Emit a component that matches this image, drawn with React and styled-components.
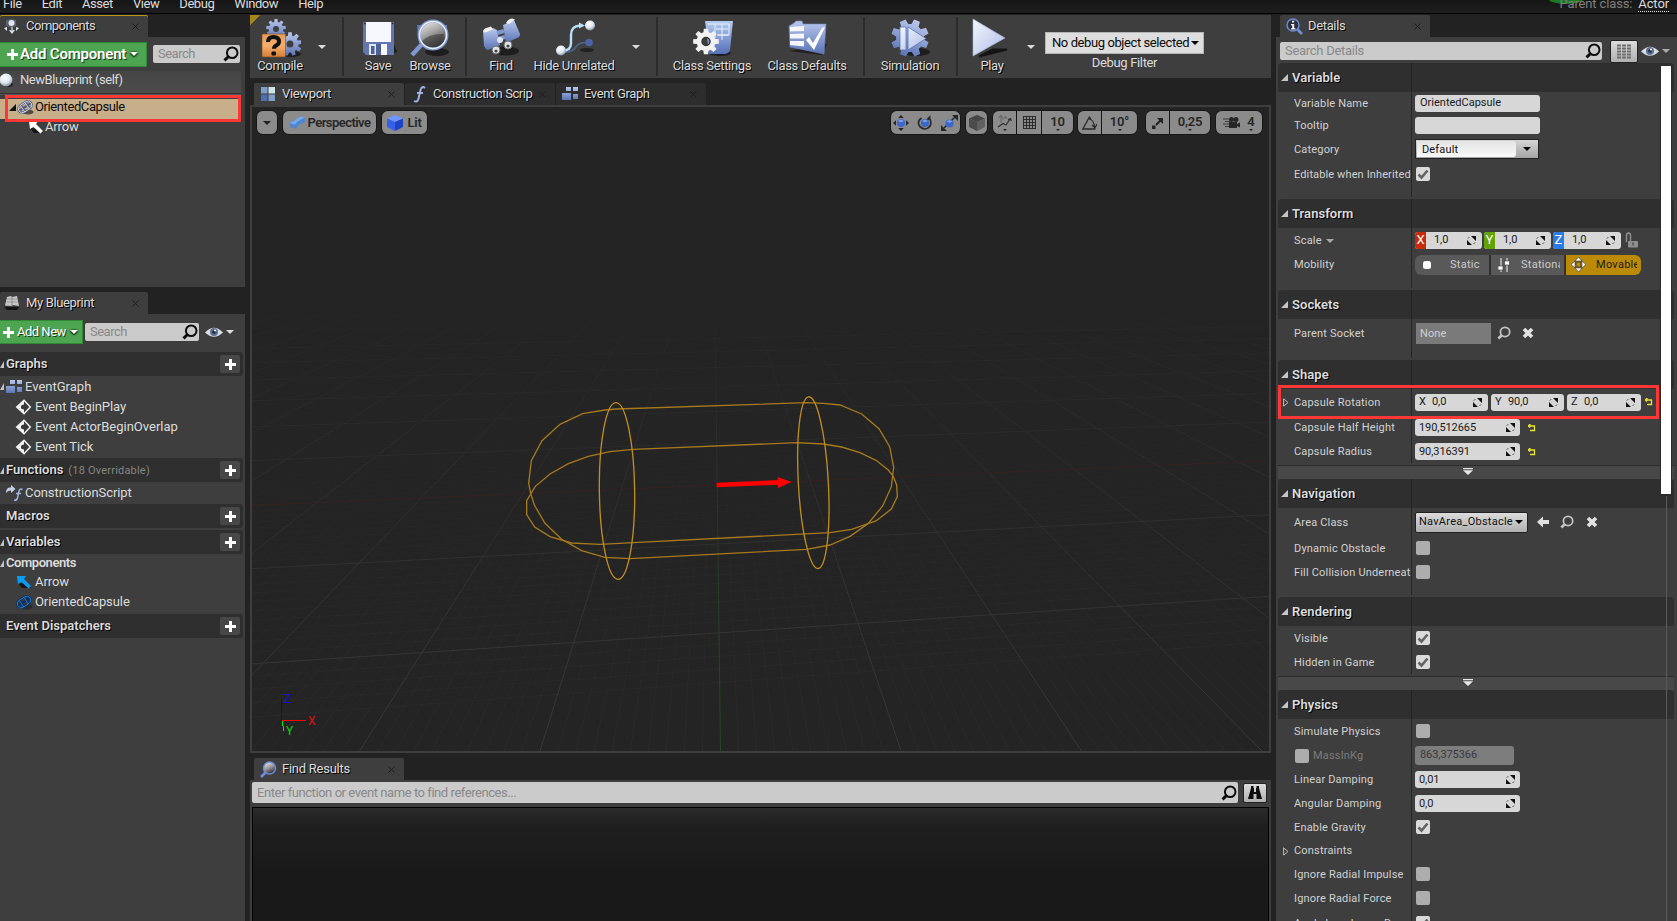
import React from "react";
import styled, { createGlobalStyle, css } from "styled-components";

const GlobalStyle = createGlobalStyle`
  * { box-sizing: border-box; }
  body { margin: 0; background: #222; overflow: hidden; }
  svg { display: block; flex: none; }
`;

/* ---------- shell ---------- */

const Editor = styled.div`
  width: 1677px;
  height: 921px;
  overflow: hidden;
  display: flex;
  flex-direction: column;
  background: #222222;
  color: #dcdcdc;
  font-family: Roboto, "Liberation Sans", sans-serif;
  font-size: 13px;
  line-height: 16px;
  white-space: nowrap;
`;

const MenuBar = styled.div`
  flex: none;
  height: 14px;
  display: flex;
  justify-content: space-between;
  padding: 0 8px 0 3px;
  background: linear-gradient(#161616, #1e1e1e);
  border-bottom: 1px solid #000;
  overflow: hidden;
`;

const MenuGroup = styled.div`
  display: flex;
  gap: ${(p) => p.$gap}px;
  margin-top: -4px;
  letter-spacing: ${(p) => p.$ls || 0}px;
`;

const ParentLabel = styled.span`
  color: #808080;
  letter-spacing: -0.15px;
`;

const ParentLink = styled.span`
  height: 16px;
  letter-spacing: -0.1px;
  border-bottom: 1px dotted #ddd;
`;

const GreenMark = styled.div`
  width: 36px;
  height: 12px;
  margin: -4px -30px 0 0;
  border-radius: 50%;
  background: #1e7a1e;
`;

const Body = styled.div`
  flex: 1;
  min-height: 0;
  display: grid;
  grid-template-columns: 245px 1021px 401px;
  column-gap: 5px;
  padding-top: 1px;
`;

const Column = styled.div`
  display: flex;
  flex-direction: column;
  min-width: 0;
  min-height: 0;
`;

const TabStrip = styled.div`
  flex: none;
  display: flex;
  gap: 1px;
  height: 22px;
  margin-top: ${(p) => p.$mt || 0}px;
  padding-left: ${(p) => p.$pl || 0}px;
`;

const TabBox = styled.div`
  display: flex;
  align-items: center;
  width: ${(p) => p.$w || 150}px;
  height: 22px;
  padding: 0 9px 0 ${(p) => p.$pl ?? 6}px;
  border-radius: 2px 2px 0 0;
  background: ${(p) => (p.$dim ? "#2d2d2d" : "#3e3e3e")};
  text-shadow: 1px 1px 0 #000;
  letter-spacing: ${(p) => p.$ls ?? -0.35}px;
  ${(p) => p.$accent && css`box-shadow: inset 0 1px 0 #b8960f;`}
`;

const TabText = styled.span`
  flex: 1;
  margin-left: ${(p) => p.$ml ?? 6}px;
`;

const Panel = styled.div`
  display: flex;
  flex-direction: column;
  background: #3e3e3e;
  ${(p) => (p.$h ? css`height: ${p.$h}px; flex: none;` : css`flex: 1; min-height: 0;`)}
`;

/* ---------- shared controls ---------- */

const GreenButton = styled.div`
  display: flex;
  align-items: center;
  width: ${(p) => p.$w}px;
  height: ${(p) => p.$h}px;
  padding-left: ${(p) => p.$pl}px;
  gap: ${(p) => p.$gap}px;
  color: #fff;
  background: #4ea551;
  border: 1px solid #2f8a35;
  border-left: 0;
  text-shadow: 1px 1px 0 #1c3c1d;
  font-size: ${(p) => p.$size}px;
  font-weight: ${(p) => p.$weight};
  letter-spacing: ${(p) => p.$ls}px;
`;

const SearchField = styled.div`
  display: flex;
  align-items: center;
  justify-content: space-between;
  width: ${(p) => p.$w}px;
  height: ${(p) => p.$h || 18}px;
  margin-left: ${(p) => p.$ml || 0}px;
  padding: 0 1px 0 5px;
  border-radius: 2px;
  background: #cbcbcb;
  color: #898989;
  letter-spacing: ${(p) => p.$ls ?? -0.5}px;
`;

const Caret = styled.i`
  display: block;
  flex: none;
  width: 0;
  height: 0;
  margin-left: ${(p) => p.$ml || 0}px;
  border-style: solid;
  border-color: ${(p) => p.$c || "#dcdcdc"} transparent transparent;
  border-width: ${(p) => p.$s || 4}px ${(p) => p.$s || 4}px 0;
`;

const BoldCaret = styled(Caret)`
  filter: drop-shadow(0 0 1px #12300f) drop-shadow(0 1px 0 #12300f);
`;

const Corner = styled.i`
  display: block;
  flex: none;
  width: 0;
  height: 0;
  border-style: solid;
  border-color: transparent transparent ${(p) => p.$c || "#c4c4c4"} transparent;
  border-width: 0 0 7px ${(p) => p.$s || 7}px;
`;

/* ---------- left column ---------- */

const ToolRow = styled.div`
  flex: none;
  display: flex;
  align-items: center;
  height: ${(p) => p.$h}px;
  padding-bottom: ${(p) => p.$pb || 0}px;
`;

const SelfRow = styled.div`
  flex: none;
  display: flex;
  align-items: center;
  gap: 7px;
  height: 22px;
  width: 241px;
  padding-bottom: 4px;
  letter-spacing: -0.45px;
  background: linear-gradient(#454545, #4c4c4c);
  box-shadow: 0 1px 0 #333, 0 2px 0 #555;
`;

const TreeRow = styled.div`
  position: relative;
  flex: none;
  display: flex;
  align-items: center;
  height: ${(p) => p.$h || 20}px;
  padding-left: ${(p) => p.$pl || 0}px;
  gap: ${(p) => p.$gap ?? 3}px;
  letter-spacing: ${(p) => p.$ls ?? -0.07}px;
  font-weight: ${(p) => (p.$bold ? 600 : 400)};
  ${(p) => p.$selected && css`
    width: 239px;
    margin-top: 6px;
    padding-bottom: 4px;
    color: #0d0d0d;
    background: #c9ae8a;
  `}
`;

const RedFrame = styled.div`
  position: absolute;
  left: ${(p) => p.$x}px;
  top: ${(p) => p.$y}px;
  width: ${(p) => p.$w}px;
  height: ${(p) => p.$h}px;
  border: 3px solid #fb3836;
  z-index: 2;
`;

const SectionBar = styled.div`
  flex: none;
  display: flex;
  align-items: center;
  width: 243px;
  height: 24px;
  margin-top: ${(p) => p.$mt || 0}px;
  padding: 0 3px 0 ${(p) => (p.$closed ? 6 : 0)}px;
  background: #2f2f2f;
  border-radius: 0 3px 3px 0;
  font-weight: 600;
  text-shadow: 1px 1px 0 #000;
`;

const SectionTitle = styled.span`
  margin-left: ${(p) => p.$ml || 0}px;
  letter-spacing: 0px;
`;

const SectionNote = styled.span`
  margin: 2px 0 0 5px;
  color: #858585;
  font-size: 11px;
  font-weight: 400;
  text-shadow: none;
  letter-spacing: 0.2px;
`;

const PlusButton = styled.div`
  width: 20px;
  height: 18px;
  margin-left: auto;
  display: grid;
  place-items: center;
  border-radius: 2px;
  background: #474747;
`;

/* ---------- toolbar ---------- */

const Toolbar = styled.div`
  flex: none;
  display: flex;
  height: 63px;
  background: linear-gradient(135deg, #a5841c 0 7px, transparent 7.5px), #3e3e3e;
`;

const ToolItem = styled.div`
  flex: none;
  display: flex;
  flex-direction: column;
  align-items: center;
  width: ${(p) => p.$w}px;
  padding-top: 3px;
  text-shadow: 1px 1px 0 #000;
  letter-spacing: -0.32px;
`;

const ToolDrop = styled.div`
  flex: none;
  display: grid;
  place-items: center;
  width: ${(p) => p.$w || 24}px;
  height: 63px;
  margin-left: ${(p) => p.$ml || 0}px;
`;

const ToolSep = styled.div`
  flex: none;
  width: 2px;
  height: 59px;
  margin: 2px 0 0 ${(p) => p.$ml}px;
  background: #2b2b2b;
`;

const DebugBox = styled.div`
  display: flex;
  flex-direction: column;
  align-items: center;
  gap: 1px;
  width: 159px;
  margin: 17px 0 0 9px;
  letter-spacing: -0.35px;
`;

const DebugSelect = styled.div`
  display: flex;
  align-items: center;
  width: 159px;
  height: 22px;
  padding-left: 6px;
  background: #dedede;
  border: 1px solid #b5b5b5;
  color: #0a0a0a;
  letter-spacing: -0.41px;
`;

/* ---------- viewport ---------- */

const ViewFrame = styled.div`
  position: relative;
  flex: none;
  width: 1021px;
  height: 648px;
  border: 2px solid #3e3e3e;
  background: #242424;
`;

const Scene = styled.svg`
  position: absolute;
  left: 0;
  top: 0;
`;

const ViewTools = styled.div`
  position: relative;
  display: flex;
  padding: 3px 4px 0 4px;
`;

const Pill = styled.div`
  display: flex;
  width: ${(p) => p.$w}px;
  height: 25px;
  margin-left: ${(p) => p.$ml || 0}px;
  border: 1px solid #151515;
  border-radius: 7px;
  background: #8b8b8b;
  color: #262626;
  font-weight: 600;
  letter-spacing: ${(p) => p.$ls ?? -0.15}px;
  overflow: hidden;
`;

const PillPart = styled.div`
  flex: ${(p) => (p.$w ? "none" : 1)};
  width: ${(p) => (p.$w ? p.$w + "px" : "auto")};
  display: flex;
  flex-direction: ${(p) => (p.$col ? "column" : "row")};
  align-items: center;
  justify-content: center;
  gap: ${(p) => p.$gap || 0}px;
  border-left: ${(p) => (p.$line ? "1px solid #151515" : "0")};
  line-height: 15px;
`;

/* ---------- find results ---------- */

const FindBar = styled.div`
  display: flex;
  align-items: center;
  gap: 5px;
  padding: 2px 0 0 2px;
`;

const SilverButton = styled.div`
  display: grid;
  place-items: center;
  width: ${(p) => p.$w}px;
  height: ${(p) => p.$h}px;
  border-radius: 2px;
  border: 1px solid #222;
  background: linear-gradient(#dcdcdc, #b0b0b0);
`;

const ResultList = styled.div`
  flex: 1;
  margin: 4px 2px 0 2px;
  border: 1px solid #000;
  border-bottom: 0;
  background: linear-gradient(#2a2a2a, #1f1f1f 18px, #181818 70px, #191919);
`;

/* ---------- details ---------- */

const DetailsBody = styled(Panel)`
  position: relative;
  padding: 5px 3px 0 2px;
`;

const DetailTools = styled.div`
  flex: none;
  display: flex;
  align-items: center;
  height: 18px;
  margin-bottom: 3px;
  padding-left: 2px;
`;

const CategoryHead = styled.div`
  flex: none;
  display: flex;
  height: 29px;
  margin-top: ${(p) => p.$mt ?? 0}px;
  background: #2f2f2f;
  border-radius: 4px 4px 0 0;
`;

const HeadCell = styled.div`
  display: flex;
  align-items: center;
  width: 134px;
  gap: 4px;
  padding-left: 3px;
  border-right: 1px solid #222;
  font-weight: 600;
  font-size: 13px;
  letter-spacing: 0.05px;
  text-shadow: 1px 1px 0 #000;
`;

const PropRow = styled.div`
  position: relative;
  flex: none;
  display: flex;
  height: ${(p) => p.$h}px;
`;

const PropLabel = styled.div`
  flex: none;
  display: flex;
  align-items: center;
  width: 134px;
  padding-top: 1px;
  padding-left: ${(p) => p.$pl ?? 16}px;
  gap: ${(p) => p.$gap ?? 4}px;
  border-right: 1px solid #262626;
  color: ${(p) => (p.$dim ? "#7c7c7c" : "#d2d2d2")};
  font-size: 11px;
  letter-spacing: ${(p) => p.$ls ?? 0.18}px;
  overflow: hidden;
`;

const PropValue = styled.div`
  display: flex;
  align-items: center;
  padding-left: ${(p) => p.$pl ?? 3}px;
  font-size: 11px;
  letter-spacing: 0.1px;
`;

const Field = styled.div`
  display: flex;
  align-items: center;
  justify-content: space-between;
  width: ${(p) => p.$w}px;
  height: ${(p) => p.$h || 17}px;
  margin-right: ${(p) => p.$mr || 0}px;
  padding: 0 5px 0 ${(p) => p.$pl ?? 4}px;
  border-radius: 3px;
  background: ${(p) => (p.$dim ? "#7d7d7d" : "#d7d7d7")};
  color: ${(p) => (p.$dim ? "#3a3a3a" : "#1a1a1a")};
  letter-spacing: ${(p) => p.$ls ?? -0.08}px;
`;

const AxisField = styled(Field)`
  padding-left: 0;
  padding-right: 6px;
  justify-content: flex-start;
  overflow: hidden;
  & > svg { margin-left: auto; }
`;

const AxisTag = styled.span`
  display: grid;
  place-items: center;
  align-self: stretch;
  width: 11px;
  margin-right: 8px;
  color: #fff;
  font-size: 13px;
  letter-spacing: 0;
  background: ${(p) => p.$c};
`;

const AxisName = styled.span`
  width: 17px;
  padding-left: 4px;
`;

const CategoryCombo = styled.div`
  display: flex;
  width: 124px;
  height: 20px;
  padding: 1px;
  border: 1px solid #222;
  background: linear-gradient(#d5d5d5, #a5a5a5);
  color: #111;
  align-items: center;
`;

const ComboText = styled.div`
  width: 99px;
  height: 16px;
  padding-left: 5px;
  border-radius: 0 3px 3px 0;
  background: linear-gradient(#e4e4e4, #fafafa);
  letter-spacing: 0.15px;
  line-height: 17px;
`;

const ClassCombo = styled(SilverButton)`
  display: flex;
  align-items: center;
  justify-content: space-between;
  padding: 0 4px 0 3px;
  color: #111;
  letter-spacing: 0.25px;
`;

const SocketBox = styled.div`
  width: 75px;
  height: 21px;
  padding: 3px 4px;
  line-height: 15px;
  background: #7a7a7a;
  color: #cfcfcf;
`;

const CheckBox = styled.div`
  flex: none;
  display: grid;
  place-items: center;
  width: 14px;
  height: 14px;
  border-radius: 2px;
  background: ${(p) => (p.$on ? "#dadada" : "#adadad")};
`;

const Segments = styled.div`
  display: flex;
  gap: 2px;
  width: 226px;
  height: 20px;
  border-radius: 6px;
  overflow: hidden;
  background: #303030;
`;

const Segment = styled.div`
  display: flex;
  align-items: center;
  width: ${(p) => p.$w}px;
  padding-left: ${(p) => p.$pl}px;
  gap: ${(p) => p.$gap}px;
  padding-right: 4px;
  background: ${(p) => (p.$on ? "#bb8a09" : "#595959")};
  color: ${(p) => (p.$on ? "#1d1d1d" : "#cccccc")};
  letter-spacing: 0.28px;
`;

const Clip = styled.span`
  overflow: hidden;
`;

const IconGap = styled.span`
  display: block;
  margin-left: ${(p) => p.$ml}px;
`;

const Filler = styled.div`
  flex: none;
  width: 134px;
  height: ${(p) => p.$h}px;
  border-right: 1px solid #262626;
`;

const Expander = styled.div`
  flex: none;
  display: flex;
  justify-content: center;
  height: 14px;
  margin-top: 2px;
  padding: 2px 16px 0 0;
  border-top: 1px solid #2c2c2c;
  background: #484848;
`;

const ScrollThumb = styled.div`
  position: absolute;
  left: 385px;
  top: 29px;
  width: 10px;
  height: 428px;
  background: #fff;
  box-shadow: 0 1px 0 1px #2a2a2a;
  z-index: 3;
`;

const ScrollTrack = styled.div`
  position: absolute;
  left: 390px;
  top: 457px;
  width: 1px;
  height: 430px;
  background: #595959;
`;

/* ---------- icons ---------- */

const HiddenDefs = styled.svg`
  position: absolute;
`;

const SharedGradients = () => (
  <HiddenDefs width="0" height="0">
    <defs>
      <linearGradient id="steel" x1="0" y1="0" x2="0" y2="1"><stop offset="0" stopColor="#b9c8ee" /><stop offset="1" stopColor="#5a74b4" /></linearGradient>
      <linearGradient id="pale" x1="0" y1="0" x2="1" y2="1"><stop offset="0" stopColor="#f4f8fd" /><stop offset="1" stopColor="#aebbe6" /></linearGradient>
      <linearGradient id="sheet" x1="0" y1="0" x2="0" y2="1"><stop offset="0" stopColor="#b4cdee" /><stop offset="1" stopColor="#5570b8" /></linearGradient>
      <linearGradient id="orange" x1="0" y1="0" x2="0" y2="1"><stop offset="0" stopColor="#eb9a56" /><stop offset=".5" stopColor="#f7ad6b" /><stop offset="1" stopColor="#d57f38" /></linearGradient>
      <linearGradient id="glass" x1="0" y1="0" x2=".5" y2="1"><stop offset="0" stopColor="#fafafa" /><stop offset=".55" stopColor="#9b9b9b" /><stop offset="1" stopColor="#333" /></linearGradient>
      <radialGradient id="ball" cx=".4" cy=".3" r=".7"><stop offset="0" stopColor="#fff" /><stop offset=".6" stopColor="#dfe8f0" /><stop offset="1" stopColor="#8a95a0" /></radialGradient>
    </defs>
  </HiddenDefs>
);

const gearPath = (cx, cy, outer, inner, teeth = 8) => {
  const pts = [];
  for (let i = 0; i < teeth; i++) {
    const a = (i * 2 * Math.PI) / teeth;
    const s = Math.PI / teeth;
    [[a - s * 0.7, inner], [a - s * 0.42, outer], [a + s * 0.42, outer], [a + s * 0.7, inner]].forEach(([t, r]) =>
      pts.push(`${(cx + r * Math.sin(t)).toFixed(2)},${(cy - r * Math.cos(t)).toFixed(2)}`)
    );
  }
  return `M${pts.join("L")}Z`;
};

const holed = (cx, cy, r) => `M${cx - r},${cy}a${r},${r} 0 1 0 ${2 * r},0a${r},${r} 0 1 0 ${-2 * r},0Z`;

const CompileIcon = () => (
  <svg width="42" height="40" viewBox="0 0 42 40">
    <ellipse cx="32" cy="36" rx="10" ry="3" fill="#1d1d1d" />
    <path fillRule="evenodd" fill="url(#steel)" d={gearPath(17, 11, 10, 7.2, 9) + holed(17, 11, 3)} />
    <path fillRule="evenodd" fill="url(#steel)" d={gearPath(31, 26, 12, 8.5, 9) + holed(31, 26, 3.5)} />
    <rect x="3" y="16" width="23.500" height="23" rx="1" fill="url(#orange)" stroke="#7a4a1e" strokeWidth=".6" />
    <path d="M9 24q0-5 5.500-5t5.500 4.500q0 2.500-2.500 3.800t-2.500 3.400" fill="none" stroke="#111" strokeWidth="4" />
    <rect x="12.500" y="33.500" width="4.500" height="4" rx="1" fill="#111" />
  </svg>
);

const SaveIcon = () => (
  <svg width="42" height="40" viewBox="0 0 42 40">
    <path d="M30 38l10-4-4-10z" fill="#1d1d1d" />
    <path d="M6 4h31v33H9l-3-3z" fill="#6377ae" />
    <rect x="9" y="4" width="25" height="20" fill="#f6f8fd" />
    <rect x="12" y="26" width="18" height="11" fill="#dfe5f5" />
    <rect x="19" y="26" width="5" height="11" fill="#4d6097" /><rect x="14" y="28" width="3.500" height="8" fill="#4d6097" />
    <path d="M24 26h6v11h-6z" fill="#f6f8fd" />
    <path d="M7 5.500h1.500M35 5.500h1.500" stroke="#20284a" strokeWidth="1.500" />
  </svg>
);

const BrowseIcon = () => (
  <svg width="42" height="40" viewBox="0 0 42 40">
    <ellipse cx="28" cy="34" rx="12" ry="4" fill="#1d1d1d" />
    <path d="M8 7h30v18H10z" fill="#5f78b5" />
    <path d="M3 37L14 25" stroke="#7f98d0" strokeWidth="4.500" />
    <circle cx="24" cy="17" r="14" fill="url(#glass)" stroke="#7f9ad2" strokeWidth="3" />
    <circle cx="24" cy="17" r="13.500" fill="none" stroke="#e8effb" strokeWidth="1.400" />
    <path d="M13 23q8-8 22-7q-1 13-11 13q-8 0-11-6z" fill="#3a3a3a" opacity=".6" />
  </svg>
);

const FindIcon = () => (
  <svg width="42" height="40" viewBox="0 0 42 40">
    <ellipse cx="26" cy="33" rx="13" ry="4.500" fill="#1e1e1e" />
    <path d="M3 13l10-3 4 2 3 15-12 5q-3-1-4-4z" fill="url(#steel)" />
    <path d="M23 7l11-5 6 14q0 3-3 4l-11 5z" fill="url(#steel)" />
    <path d="M3 13q1-3 5-3.500l3-1 2 3-8 3zM26 5q2-4 6-4.500l3 1-6 4.500z" fill="#f2f2ee" />
    <path d="M17 15l7-2M18 21l7-2" stroke="#8198cf" strokeWidth="4" />
    <circle cx="20" cy="22" r="3" fill="#dde5f5" />
    <circle cx="16" cy="32" r="4" fill="#e2e5e8" stroke="#6b6b6b" /><circle cx="16" cy="33" r="1.600" fill="#444" />
    <circle cx="28" cy="27" r="4" fill="#e2e5e8" stroke="#6b6b6b" /><circle cx="28" cy="28" r="1.600" fill="#444" />
  </svg>
);

const HideIcon = () => (
  <svg width="42" height="40" viewBox="0 0 42 40">
    <ellipse cx="34" cy="32" rx="7" ry="2" fill="#222" />
    <path d="M6 33q12 3 16-3t11-5" fill="none" stroke="#4c6690" strokeWidth="1.500" />
    <circle cx="36" cy="24.500" r="3.800" fill="#4b62a4" />
    <path d="M9 33q9 0 9-8V17q0-9 9-9.500" fill="none" stroke="#b8e0f8" strokeWidth="2.400" />
    <path d="M26 4.500l6 3-6 3z" fill="#b8e0f8" />
    <circle cx="8" cy="32.500" r="5" fill="url(#ball)" /><circle cx="37" cy="7.500" r="5" fill="url(#ball)" />
  </svg>
);

const SettingsIcon = () => (
  <svg width="42" height="40" viewBox="0 0 42 40">
    <ellipse cx="29" cy="35" rx="11" ry="3" fill="#1d1d1d" />
    <path d="M14 3h28l-3 29q-1 4-6 4H18z" fill="url(#sheet)" />
    <path d="M17 6h21v11H26M24 6v14M31 6v16M25 11h12M27 17h10" fill="none" stroke="#e9f2ff" strokeWidth="1" />
    <path fillRule="evenodd" fill="#f2f2f2" d={gearPath(15, 23.500, 13, 9.500, 8) + holed(15, 23.500, 4)} />
    <circle cx="15" cy="23.500" r="4" fill="none" stroke="#333" strokeWidth="1.500" />
  </svg>
);

const DefaultsIcon = () => (
  <svg width="42" height="40" viewBox="0 0 42 40">
    <path d="M3 33l33 4 5-11z" fill="#202020" />
    <path d="M3 8l5-3 2-2h6l1 3h23l-2 30L4 29z" fill="url(#steel)" stroke="#7186bd" strokeWidth=".6" />
    <path d="M4 9l14-1v5l-14 .5zM4 16l14-.5v5l-14 0zM4 23l14 0v5.500l-14-1.500z" fill="#f4f6fa" />
    <path d="M20 22l3-3 4 6 9-15 3-1-11 23z" fill="#fff" />
  </svg>
);

const SimulationIcon = () => (
  <svg width="42" height="40" viewBox="0 0 42 40">
    <ellipse cx="27" cy="34" rx="14" ry="4" fill="#1d1d1d" />
    <path fill="url(#steel)" transform="rotate(22 21 20)" d={gearPath(21, 20, 19, 14, 8)} />
    <path d="M11 9h6v23h-6zM19 9l18 11.500-18 11.500z" fill="url(#pale)" stroke="#5b74b4" strokeWidth=".8" />
  </svg>
);

const PlayIcon = () => (
  <svg width="42" height="40" viewBox="0 0 42 40">
    <path d="M8 38.500l28-7-14 0z" fill="#151515" stroke="#151515" strokeWidth="2" />
    <path d="M2 1l32 19L2 38z" fill="url(#pale)" stroke="#a8b5d8" strokeWidth=".6" />
  </svg>
);

const SearchIcon = ({ s = 16, c = "#0b0b0b" }) => (
  <svg width={s} height={s} viewBox="0 0 16 16">
    <circle cx="9.200" cy="6.800" r="5.300" fill="none" stroke={c} strokeWidth="2" />
    <path d="M5.500 10.500L1.500 14.300" stroke={c} strokeWidth="3" />
  </svg>
);

const EyeIcon = () => (
  <svg width="18" height="12" viewBox="0 0 18 12">
    <path d="M0 6.500Q9-3 18 6.500Q9 15 0 6.500z" fill="#d9dde2" />
    <circle cx="9" cy="6" r="4" fill="#5c7192" /><circle cx="9" cy="6" r="1.800" fill="#1e2a40" /><circle cx="10" cy="4.500" r="1" fill="#fff" />
  </svg>
);

const PlusIcon = ({ s = 11 }) => (
  <svg width={s} height={s} viewBox="0 0 11 11"><path d="M4 0h3v4h4v3H7v4H4V7H0V4h4z" fill="#fff" /></svg>
);

const CloseIcon = () => (
  <svg width="7" height="7" viewBox="0 0 7 7"><path d="M.5.5l6 6M6.500.5l-6 6" stroke="#1c1c1c" strokeWidth="1" /></svg>
);

const GridIcon = ({ kind }) =>
  kind === "window" ? (
    <svg width="16" height="16" viewBox="0 0 16 16">
      <rect x="1" y="1" width="6.500" height="6.500" fill="#7f9fc8" /><rect x="8.500" y="1" width="6.500" height="6.500" fill="#cfe6e6" />
      <rect x="1" y="8.500" width="6.500" height="6.500" fill="#4f6fae" /><rect x="8.500" y="8.500" width="6.500" height="6.500" fill="#7f9fc8" />
    </svg>
  ) : (
    <svg width="17" height="14" viewBox="0 0 17 14">
      <path d="M4 0h5v4H4zM11 0h5v4h-5zM0 6h9v7H0zM11 7h5v5h-5z" fill="url(#steel)" />
    </svg>
  );

const FunctionIcon = ({ arrow }) => (
  <svg width="17" height="17" viewBox="0 0 17 17">
    {arrow && <path d="M0 8q0-6 5-5.500V0l4.500 4-4.500 4V5.500Q2 5 0 8z" fill="#c4cfe8" />}
    <path d={arrow ? "M16.500 4.500q-2.500-1.500-3.500 1.500l-1.500 7q-.8 2.700-3.500 2.300M10 8.500h5" : "M14 2q-3-2.500-4.500 2l-2 8.500Q6.500 17 3 15M6 7h6"} fill="none" stroke="#9fb2e2" strokeWidth={arrow ? 1.500 : 2} />
  </svg>
);

const ComponentsIcon = () => (
  <svg width="16" height="16" viewBox="0 0 16 16">
    <path d="M2 2l5-1 5 1v6l-5 2-5-2z" fill="#59616c" /><circle cx="7.500" cy="5" r="3" fill="#dfe7f2" />
    <path d="M0 10l3-1v4zM15 10l-3-1v4zM8 16l-3-4h6z" fill="#dde3ea" /><path d="M7 9h2v4H7z" fill="#9aa" />
  </svg>
);

const BookIcon = () => (
  <svg width="16" height="16" viewBox="0 0 16 16">
    <path d="M0 12h15l-2 3H3z" fill="#141414" /><path d="M3 2l4-1 1 1 5-1 2 10-6-1-1 1-7-.5z" fill="#c9c9c9" /><path d="M3 4h10M2.500 7h11" stroke="#999" /><path d="M8 2v9" stroke="#666" strokeWidth=".6" />
  </svg>
);

const LensIcon = ({ info }) => (
  <svg width="17" height="17" viewBox="0 0 17 17">
    <path d={info ? "M11 11l5 5" : "M6 11l-5 5"} stroke="#6c8de0" strokeWidth="2.600" />
    <circle cx={info ? 7 : 9.500} cy="7" r="6" fill={info ? "#2c3038" : "url(#glass)"} stroke="#6d8ad6" strokeWidth="1.500" />
    {info && <path d="M6 4.500V2.800h2.200v1.700zM5 6h3.200v4.200H9.500v1.300H5v-1.300h1.200V7.300H5z" fill="#f4f4f4" />}
  </svg>
);

const SphereIcon = () => (
  <svg width="13" height="15" viewBox="0 0 13 15"><ellipse cx="8" cy="11.500" rx="5" ry="2.500" fill="#222" /><circle cx="6" cy="7" r="6.500" fill="url(#ball)" /></svg>
);

const CapsuleIcon = ({ c = "#dfe6f5", b = "#4c587c" }) => (
  <svg width="17" height="17" viewBox="0 0 17 17">
    <ellipse cx="11" cy="13" rx="5.500" ry="2.500" fill="#222" opacity=".7" />
    <g transform="rotate(-33 8 8)" fill="none" stroke={b} strokeWidth="2.200"><rect x="0.800" y="4" width="14.500" height="8" rx="4" /><path d="M5.500 4v8M11 4v8M1 8h14" /></g>
    <g transform="rotate(-33 8 8)" fill="none" stroke={c} strokeWidth=".8"><rect x="0.800" y="4" width="14.500" height="8" rx="4" /><path d="M5 4v8M10.500 4v8" /></g>
  </svg>
);

const ArrowIcon = ({ c }) => (
  <svg width="16" height="15" viewBox="0 0 16 15">
    <path d="M2 8l4 5h9l-3-4z" fill="#161616" /><path d="M1 1h9L8 4l7 7-2.500 2.500-7-6.500L2 9z" fill={c} />
  </svg>
);

const EventIcon = () => (
  <svg width="17" height="16" viewBox="0 0 17 16">
    <path d="M9 1.200L15.300 8 9 14.800 1.700 8z" fill="#3a3a3a" stroke="#f0f0f0" strokeWidth="1.500" />
    <path d="M9 1.500v4L7 6v4l2 .5v4L2 8z" fill="#f4f4f4" />
    <path d="M4 6.600h3.500v3H4z" fill="#3a3a3a" />
    <path d="M2.500 8l3.500-3v6z" fill="#f4f4f4" />
  </svg>
);

const SpinIcon = () => (
  <svg width="9" height="9" viewBox="0 0 9 9"><path d="M4 0h5v5zM0 4v5h5z" fill="#101010" /><path d="M.8 2.600L2.300 1.100M6.500 8l1.500-1.500" stroke="#333" strokeWidth=".9" /></svg>
);

const ResetIcon = () => (
  <svg width="8" height="8" viewBox="0 0 8 8"><path d="M0 2h6.500v4.500H2M0 2l2.500-2M0 2l2 1.500" fill="none" stroke="#e8e337" strokeWidth="1.300" /></svg>
);

const CheckMark = () => (
  <svg width="12" height="12" viewBox="0 0 12 12"><path d="M1.500 6.500l3 3L10.500 2.500" fill="none" stroke="#636363" strokeWidth="2.600" /></svg>
);

const CrossIcon = () => (
  <svg width="12" height="12" viewBox="0 0 12 12"><path d="M2 2l8 8M10 2l-8 8" stroke="#e2e2e2" strokeWidth="3.600" /></svg>
);

const BackIcon = () => (
  <svg width="12" height="12" viewBox="0 0 12 12"><path d="M0 6l6-5.500V4h6v4H6v3.500z" fill="#e2e2e2" /></svg>
);

const LockIcon = () => (
  <svg width="14" height="16" viewBox="0 0 14 16"><path d="M1.500 10V3.500q0-2.500 2-2.500t2 2.500V9" fill="none" stroke="#8d8d8d" strokeWidth="1.500" /><rect x="3" y="9" width="10" height="6.500" rx="1" fill="#8d8d8d" /><path d="M8 10.500v3" stroke="#333" /></svg>
);

const MixIcon = () => (
  <svg width="12" height="16" viewBox="0 0 12 16"><path d="M3 1v14M9 1v14" stroke="#ddd" strokeWidth="1.200" /><path d="M0 9h5v4H0zM6.500 4h5v4h-5z" fill="#fff" stroke="#333" strokeWidth=".6" /></svg>
);

const MoveMark = () => (
  <svg width="15" height="15" viewBox="0 0 15 15"><path d="M7.500 0L11 4H4zM7.500 15L4 11h7zM0 7.500L4 4v7zM15 7.500L11 11V4z" fill="#fff" stroke="#333" strokeWidth=".6" /><rect x="5" y="5" width="5" height="5" fill="#bb8a09" stroke="#333" strokeWidth=".8" /></svg>
);

const ExpandMark = () => (
  <svg width="10" height="7" viewBox="0 0 10 7"><path d="M0 0h10v1.200H0zM0 2.200h10L5 7z" fill="#e8e8e8" /></svg>
);

const SideMark = () => (
  <svg width="6" height="9" viewBox="0 0 6 9"><path d="M.6.800L5 4.500.6 8.200z" fill="none" stroke="#bbb" strokeWidth="1" /></svg>
);

const ListIcon = () => (
  <svg width="14" height="15" viewBox="0 0 14 15"><path d="M0 1.500h14M0 4.500h14M0 7.500h14M0 10.500h14M0 13.500h14" stroke="#6e6e6e" strokeWidth="2" strokeDasharray="4 1" /></svg>
);

const BinocularIcon = () => (
  <svg width="14" height="14" viewBox="0 0 14 14"><path d="M3 0h2.500v2H6v4h2V2h.5V0H11v2l3 11H8.500V8h-3v5H0L3 2z" fill="#0c0c0c" /></svg>
);

const CubeIcon = ({ top = "#6f97ff", left = "#3561ea", right = "#1f43c4", s = 16 }) => (
  <svg width={s} height={s} viewBox="0 0 16 16"><path d="M8 0l8 3.500L8 7 0 3.500z" fill={top} /><path d="M0 3.500L8 7v9l-8-4z" fill={left} /><path d="M16 3.500L8 7v9l8-4z" fill={right} /></svg>
);

const CameraBox = () => (
  <svg width="16" height="13" viewBox="0 0 16 13"><path d="M0 7l5-2 2-2 5-2.500q3 0 4 2v3.500l-6 3-3 3.500-5-1z" fill="#4f86d4" /><path d="M0 7l5-2 2-2 5-2.500q2 0 3.500 1L8 6 6 8.500z" fill="#76a8ea" /></svg>
);

const MoveIcon = () => (
  <svg width="16" height="16" viewBox="0 0 16 16"><path d="M8 0l2.800 3H5.200zM8 16l-2.800-3h5.600zM0 8l3-2.800v5.600zM16 8l-3 2.800V5.200z" fill="#262626" /><circle cx="8" cy="8" r="4" fill="#3c66c8" /><path d="M5 6l3-1.500L11 6 8 7.300z" fill="#7fa0ea" /></svg>
);

const RotateIcon = () => (
  <svg width="16" height="16" viewBox="0 0 16 16"><path d="M4.500 3Q0 6 2.200 10.500 5 15 10 13.500q5-2.500 3.500-8L11 2.500" fill="none" stroke="#2c2c2c" strokeWidth="1.700" /><path d="M13.500 0v5H9z" fill="#2c2c2c" /><circle cx="8" cy="8" r="4" fill="#3c66c8" /><path d="M5 6l3-1.500L11 6 8 7.300z" fill="#7fa0ea" /></svg>
);

const ScaleIcon = () => (
  <svg width="17" height="16" viewBox="0 0 17 16"><path d="M11 0h6v6zM0 10v6h6z" fill="#262626" /><path d="M10 6l4-4M3 13l3-3" stroke="#262626" strokeWidth="1.500" /><circle cx="8.500" cy="8.500" r="4" fill="#3c66c8" /><path d="M5.500 6.500l3-1.500 3 1.500-3 1.300z" fill="#7fa0ea" /></svg>
);

const SurfaceIcon = () => (
  <svg width="15" height="14" viewBox="0 0 15 14"><path d="M1 13l5-3.500L9 11l4-6M11 5.500l2.500-1 .8 2.500" fill="none" stroke="#333" strokeWidth="1.300" /><path d="M4 9V2M2 4l2-3 2 3M5 5.500l4-2.500M7.500 2.500L9.500 3 9 5" fill="none" stroke="#666" /></svg>
);

const SnapGrid = () => (
  <svg width="13" height="13" viewBox="0 0 13 13"><path d="M.5 0v13M3.500 0v13M6.500 0v13M9.500 0v13M12.500 0v13M0 .5h13M0 3.500h13M0 6.500h13M0 9.500h13M0 12.500h13" stroke="#2a2a2a" strokeWidth="1" /></svg>
);

const AngleIcon = () => (
  <svg width="15" height="14" viewBox="0 0 15 14"><path d="M7.500.8L.9 13h12.500M7.500.8L9 4" fill="none" stroke="#2a2a2a" strokeWidth="1.300" /><path d="M7 3q5 1 5.500 8M10 9l3 3 2-4" fill="none" stroke="#2a2a2a" strokeWidth="1.200" /></svg>
);

const ScaleSnap = () => (
  <svg width="12" height="12" viewBox="0 0 12 12"><path d="M5 1h6v6zM0 8.500h3.500V12H0z" fill="#222" /><path d="M4 8l5-5" stroke="#222" strokeWidth="1.900" /></svg>
);

const SpeedIcon = () => (
  <svg width="17" height="12" viewBox="0 0 17 12"><path d="M0 2h6M2 4.500h5M0 7h6M2 9.500h6" stroke="#3a3a3a" strokeWidth="1" /><circle cx="8.500" cy="2.500" r="2.500" fill="#262626" /><circle cx="13" cy="2.500" r="2.500" fill="#262626" /><path d="M6 5h8v2l3-1.500v5L14 9v2H6z" fill="#262626" /></svg>
);

/* ---------- viewport scene ---------- */

// Perspective floor grid: rays meet at the horizon, cross lines follow 1/depth.
const HORIZON = 193;
const floorRays = [];
for (let i = -110; i <= 110; i++) {
  floorRays.push({ x: 720.5 + i * 18.05, major: i % 10 === 0, axis: i === 0 });
}
const floorRows = [];
for (let i = -24; i <= 60; i++) {
  const d = 1 / (0.003448 + i * 0.000058);
  const tilt = (0.155 * d) / 2;
  floorRows.push({ y1: HORIZON + d + tilt, y2: HORIZON + d - tilt, major: i % 10 === 0, axis: i === 0 });
}

const ViewportScene = () => (
  <Scene width="1017" height="644" viewBox="252 107 1017 644">
    <defs>
      <linearGradient id="depth" x1="0" y1="250" x2="0" y2="720" gradientUnits="userSpaceOnUse">
        <stop offset="0" stopColor="#000" /><stop offset=".35" stopColor="#555" /><stop offset="1" stopColor="#fff" />
      </linearGradient>
      <linearGradient id="depthFine" x1="0" y1="330" x2="0" y2="720" gradientUnits="userSpaceOnUse">
        <stop offset="0" stopColor="#000" /><stop offset="1" stopColor="#fff" />
      </linearGradient>
      <mask id="fade" maskUnits="userSpaceOnUse" x="252" y="107" width="1017" height="644"><rect x="252" y="107" width="1017" height="644" fill="url(#depth)" /></mask>
      <mask id="fadeFine" maskUnits="userSpaceOnUse" x="252" y="107" width="1017" height="644"><rect x="252" y="107" width="1017" height="644" fill="url(#depthFine)" /></mask>
    </defs>
    <g mask="url(#fadeFine)" stroke="#2a2a2a">
      {floorRays.filter((r) => !r.major).map((r) => <line key={r.x} x1="713.5" y1={HORIZON} x2={r.x} y2="751" />)}
      {floorRows.filter((r) => !r.major).map((r) => <line key={r.y1} x1="252" y1={r.y1} x2="1270" y2={r.y2} />)}
    </g>
    <g mask="url(#fade)" stroke="#383838">
      {floorRays.filter((r) => r.major && !r.axis).map((r) => <line key={r.x} x1="713.5" y1={HORIZON} x2={r.x} y2="751" />)}
      {floorRows.filter((r) => r.major && !r.axis).map((r) => <line key={r.y1} x1="252" y1={r.y1} x2="1270" y2={r.y2} />)}
      <line x1="713.5" y1={HORIZON} x2="720.5" y2="751" stroke="#254a25" />
      {floorRows.filter((r) => r.axis).map((r) => <line key="x" x1="252" y1={r.y1} x2="1270" y2={r.y2} stroke="#4a2020" />)}
    </g>
    <g transform="translate(500 370) scale(.33333)" fill="none" stroke="#a67a1c" strokeWidth="4">
      <path d="M350 117L920 98L970 100L1020 105L1085 132L1137 176L1169 230L1181 292L1174 350L1148 408L1104 461L1050 499L990 525L920 538L390 566L315 562L245 542L185 508L135 460L103 405L92 370L86 340L94 272L126 212L180 163L248 131L315 120Z" />
      <path d="M400 238L890 218L970 222L1025 231L1080 248L1128 271L1165 300L1180 320L1190 345L1192 380L1174 417L1128 453L1104 461L1055 478L990 488L400 518L300 523L215 519L150 500L104 471L80 434L80 392L106 349L150 312L205 281L265 259L330 245Z" />
      <ellipse cx="351" cy="363" rx="53" ry="265" transform="rotate(-.7 351 363)" stroke="#c08d20" />
      <ellipse cx="940" cy="338" rx="45" ry="258" transform="rotate(-3.1 940 338)" stroke="#c08d20" />
      <path d="M650 345L838 337" stroke="#f00" strokeWidth="14" />
      <path d="M833 321L875 336L834 354Z" fill="#f00" stroke="none" />
    </g>
    <path d="M281.500 699v22" stroke="#0000e6" /><path d="M282 720.500h24" stroke="#f00" /><path d="M282.500 721v5M283.500 726v5" stroke="#0e0" />
    <g fontFamily="Roboto" fontSize="12">
      <text x="284" y="703" fill="#1212d8">Z</text><text x="308" y="725" fill="#e01010">X</text><text x="286" y="735" fill="#0d0">Y</text>
    </g>
  </Scene>
);

/* ---------- composed parts ---------- */

const Tab = ({ icon, label, ml, ...rest }) => (
  <TabBox {...rest}>{icon}<TabText $ml={ml}>{label}</TabText><CloseIcon /></TabBox>
);

const Section = ({ title, note, closed, mt }) => (
  <SectionBar $closed={closed} $mt={mt}>
    {!closed && <Corner $s={4} />}
    <SectionTitle $ml={closed ? 0 : 2}>{title}</SectionTitle>
    {note && <SectionNote>{note}</SectionNote>}
    <PlusButton><PlusIcon /></PlusButton>
  </SectionBar>
);

const Category = ({ title, mt }) => (
  <CategoryHead $mt={mt}><HeadCell><Corner />{title}</HeadCell></CategoryHead>
);

const Prop = ({ label, h, children, pl, lead, dim, labelPl, gap, ls, after, frame }) => (
  <PropRow $h={h}>
    <PropLabel $pl={labelPl} $dim={dim} $gap={gap} $ls={ls}>{lead}{label}{after}</PropLabel>
    <PropValue $pl={pl}>{children}</PropValue>
    {frame}
  </PropRow>
);

const Check = ({ on }) => <CheckBox $on={on}>{on && <CheckMark />}</CheckBox>;
const Num = ({ v, w = 105 }) => <Field $w={w}>{v}<SpinIcon /></Field>;
const Axis = ({ n, v, w, mr }) => <AxisField $w={w} $mr={mr} $ls={-0.1}><AxisName>{n}</AxisName>{v}<SpinIcon /></AxisField>;
const ScaleAxis = ({ n, c, w, mr }) => <AxisField $w={w} $mr={mr} $ls={-0.1}><AxisTag $c={c}>{n}</AxisTag>1,0<SpinIcon /></AxisField>;

export default function App() {
  return (
    <Editor>
      <GlobalStyle />
      <SharedGradients />
      <MenuBar>
        <MenuGroup $gap={20} $ls={-0.43}>
          {["File", "Edit", "Asset", "View", "Debug", "Window", "Help"].map((m) => <span key={m}>{m}</span>)}
        </MenuGroup>
        <MenuGroup $gap={6}>
          <GreenMark /><ParentLabel>Parent class:</ParentLabel><ParentLink>Actor</ParentLink>
        </MenuGroup>
      </MenuBar>

      <Body>
        <Column>
          <TabStrip><Tab $w={148} $pl={4} $accent icon={<ComponentsIcon />} label="Components" ml={6} $ls={-0.5} /></TabStrip>
          <Panel $h={250}>
            <ToolRow $h={34}>
              <GreenButton $w={147} $h={25} $pl={7} $gap={2} $size={15} $weight={600} $ls={-0.2}>
                <PlusIcon />Add Component<BoldCaret $c="#fff" $ml={2} />
              </GreenButton>
              <SearchField $w={87} $ml={6}>Search<SearchIcon /></SearchField>
            </ToolRow>
            <SelfRow><SphereIcon />NewBlueprint (self)</SelfRow>
            <TreeRow $selected $pl={9} $gap={1} $ls={-0.4}>
              <Corner $c="#111" />
              <CapsuleIcon />OrientedCapsule
              <RedFrame $x={5} $y={-4} $w={236} $h={27} />
            </TreeRow>
            <TreeRow $h={16} $pl={28} $gap={1} $ls={-0.15}><ArrowIcon c="#fff" />Arrow</TreeRow>
          </Panel>

          <TabStrip $mt={5}><Tab $w={148} $pl={4} icon={<BookIcon />} label="My Blueprint" ml={6} /></TabStrip>
          <Panel>
            <ToolRow $h={38} $pb={2}>
              <GreenButton $w={83} $h={24} $pl={3} $gap={3} $size={13} $weight={400} $ls={-0.5}>
                <PlusIcon />Add New<BoldCaret $c="#fff" $ml={1} />
              </GreenButton>
              <SearchField $w={114} $ml={2}>Search<SearchIcon /></SearchField>
              <IconGap $ml={6}><EyeIcon /></IconGap><Caret $ml={3} />
            </ToolRow>
            <Section title="Graphs" />
            <TreeRow $h={21} $gap={2} $ls={0}><Corner $s={4} /><GridIcon />EventGraph</TreeRow>
            <TreeRow $pl={15}><EventIcon />Event BeginPlay</TreeRow>
            <TreeRow $pl={15} $ls={0}><EventIcon />Event ActorBeginOverlap</TreeRow>
            <TreeRow $pl={15}><EventIcon />Event Tick</TreeRow>
            <Section mt={1} title="Functions" note="(18 Overridable)" />
            <TreeRow $h={22} $pl={6} $gap={2}><FunctionIcon arrow />ConstructionScript</TreeRow>
            <Section title="Macros" closed />
            <Section title="Variables" mt={2} />
            <TreeRow $h={18} $gap={2} $bold $ls={-0.45}><Corner $s={4} />Components</TreeRow>
            <TreeRow $pl={16}><ArrowIcon c="#0a9cf5" />Arrow</TreeRow>
            <TreeRow $pl={16} $gap={2}><CapsuleIcon c="#1f8cf0" b="#0c2c58" />OrientedCapsule</TreeRow>
            <Section title="Event Dispatchers" closed mt={2} />
          </Panel>
        </Column>

        <Column>
          <Toolbar>
            <ToolItem $w={60}><CompileIcon />Compile</ToolItem>
            <ToolDrop><Caret /></ToolDrop>
            <ToolSep $ml={8} />
            <ToolItem $w={68}><SaveIcon />Save</ToolItem>
            <ToolItem $w={36}><BrowseIcon />Browse</ToolItem>
            <ToolSep $ml={17} />
            <ToolItem $w={68}><FindIcon />Find</ToolItem>
            <ToolItem $w={78}><HideIcon />Hide Unrelated</ToolItem>
            <ToolDrop $ml={11}><Caret /></ToolDrop>
            <ToolSep $ml={8} />
            <ToolItem $w={108}><SettingsIcon />Class Settings</ToolItem>
            <ToolItem $w={82}><DefaultsIcon />Class Defaults</ToolItem>
            <ToolSep $ml={15} />
            <ToolItem $w={90}><SimulationIcon />Simulation</ToolItem>
            <ToolSep $ml={1} />
            <ToolItem $w={68}><PlayIcon />Play</ToolItem>
            <ToolDrop $w={10}><Caret /></ToolDrop>
            <DebugBox>
              <DebugSelect>No debug object selected<Caret $c="#000" $ml={2} /></DebugSelect>
              Debug Filter
            </DebugBox>
          </Toolbar>
          <TabStrip $mt={5} $pl={4}>
            <Tab icon={<GridIcon kind="window" />} label="Viewport" />
            <Tab $dim icon={<FunctionIcon />} label="Construction Scrip" ml={5} $ls={-0.42} />
            <Tab $dim icon={<GridIcon />} label="Event Graph" ml={5} />
          </TabStrip>
          <ViewFrame>
            <ViewportScene />
            <ViewTools>
              <Pill $w={22}><PillPart><Caret $c="#222" /></PillPart></Pill>
              <Pill $w={95} $ml={4} $ls={-0.55}><PillPart $gap={3}><CameraBox />Perspective</PillPart></Pill>
              <Pill $w={47} $ml={4} $ls={-0.2}><PillPart $gap={4}><CubeIcon />Lit</PillPart></Pill>
              <Pill $w={71} $ml={462}><PillPart $gap={8}><MoveIcon /><RotateIcon /><ScaleIcon /></PillPart></Pill>
              <Pill $w={23} $ml={4}><PillPart><CubeIcon top="#454545" left="#4b4b4b" right="#5f5f5f" /></PillPart></Pill>
              <Pill $w={82} $ml={4}>
                <PillPart $w={23} $col $gap={1}><SurfaceIcon /><Caret $s={2} $c="#222" /></PillPart>
                <PillPart $w={25} $line><SnapGrid /></PillPart>
                <PillPart $line $col>10<Caret $s={2} $c="#222" /></PillPart>
              </Pill>
              <Pill $w={61} $ml={3}>
                <PillPart $w={23}><AngleIcon /></PillPart>
                <PillPart $line $col>10°<Caret $s={2} $c="#222" /></PillPart>
              </Pill>
              <Pill $w={66} $ml={7}>
                <PillPart $w={23}><ScaleSnap /></PillPart>
                <PillPart $line $col>0,25<Caret $s={2} $c="#222" /></PillPart>
              </Pill>
              <Pill $w={48} $ml={4}>
                <PillPart $w={30}><SpeedIcon /></PillPart>
                <PillPart $w={10} $col>4<Caret $s={2} $c="#222" /></PillPart>
              </Pill>
            </ViewTools>
          </ViewFrame>
          <TabStrip $mt={5} $pl={4}><Tab icon={<LensIcon />} label="Find Results" ml={5} $ls={-0.25} /></TabStrip>
          <Panel>
            <FindBar>
              <SearchField $w={986} $h={21} $ls={-0.44}>Enter function or event name to find references...<SearchIcon /></SearchField>
              <SilverButton $w={24} $h={20}><BinocularIcon /></SilverButton>
            </FindBar>
            <ResultList />
          </Panel>
        </Column>

        <Column>
          <TabStrip $pl={4}><Tab icon={<LensIcon info />} label="Details" ml={5} /></TabStrip>
          <DetailsBody>
            <DetailTools>
              <SearchField $w={322} $ls={-0.28}>Search Details<SearchIcon /></SearchField>
              <IconGap $ml={8}><SilverButton $w={28} $h={23}><ListIcon /></SilverButton></IconGap>
              <IconGap $ml={3}><EyeIcon /></IconGap><Caret $ml={3} $c="#aaa" />
            </DetailTools>

            <Category title="Variable" />
            <Prop label="Variable Name" h={22}><Field $w={125} $pl={5} $ls={0}>OrientedCapsule</Field></Prop>
            <Prop label="Tooltip" h={23}><Field $w={125} /></Prop>
            <Prop label="Category" h={24}><CategoryCombo><ComboText>Default</ComboText><Caret $c="#000" $ml={7} /></CategoryCombo></Prop>
            <Prop label="Editable when Inherited" h={26} pl={4} ls={0.12}><Check on /></Prop>
            <Filler $h={10} />

            <Category title="Transform" mt={2} />
            <Prop label="Scale" h={24} after={<Caret $c="#aaa" />}>
              <ScaleAxis n="X" c="#c92a0a" w={67} mr={2} />
              <ScaleAxis n="Y" c="#62a305" w={67} mr={2} />
              <ScaleAxis n="Z" c="#2a7be8" w={68} mr={4} />
              <LockIcon />
            </Prop>
            <Prop label="Mobility" h={25}>
              <Segments>
                <Segment $w={74} $pl={8} $gap={19}>
                  <svg width="8" height="8" viewBox="0 0 8 8"><rect width="8" height="8" rx="2.500" fill="#fff" /></svg>
                  <Clip>Static</Clip>
                </Segment>
                <Segment $w={73} $pl={7} $gap={11}><MixIcon /><Clip>Stationary</Clip></Segment>
                <Segment $w={75} $pl={5} $gap={10} $on><MoveMark /><Clip>Movable</Clip></Segment>
              </Segments>
            </Prop>
            <Filler $h={11} />

            <Category title="Sockets" mt={2} />
            <Prop label="Parent Socket" h={28} pl={4}>
              <SocketBox>None</SocketBox>
              <IconGap $ml={6}><SearchIcon s={14} c="#c4c4c4" /></IconGap>
              <IconGap $ml={11}><CrossIcon /></IconGap>
            </Prop>
            <Filler $h={11} />

            <Category title="Shape" mt={2} />
            <Prop label="Capsule Rotation" h={26} labelPl={5} gap={5} lead={<SideMark />} frame={<RedFrame $x={0} $y={-4} $w={381} $h={34} />}>
              <Axis n="X" v="0,0" w={73} mr={3} />
              <Axis n="Y" v="90,0" w={73} mr={3} />
              <Axis n="Z" v="0,0" w={74} mr={4} />
              <ResetIcon />
            </Prop>
            <Prop label="Capsule Half Height" h={25}><Num v="190,512665" /><IconGap $ml={8}><ResetIcon /></IconGap></Prop>
            <Prop label="Capsule Radius" h={23}><Num v="90,316391" /><IconGap $ml={8}><ResetIcon /></IconGap></Prop>
            <Expander><ExpandMark /></Expander>

            <Category title="Navigation" />
            <Prop label="Area Class" h={28}>
              <ClassCombo $w={113} $h={21}>NavArea_Obstacle<Caret $c="#000" /></ClassCombo>
              <IconGap $ml={9}><BackIcon /></IconGap>
              <IconGap $ml={11}><SearchIcon s={14} c="#c4c4c4" /></IconGap>
              <IconGap $ml={12}><CrossIcon /></IconGap>
            </Prop>
            <Prop label="Dynamic Obstacle" h={24} pl={4}><Check /></Prop>
            <Prop label="Fill Collision Underneath" h={24} pl={4}><Check /></Prop>
            <Filler $h={11} />

            <Category title="Rendering" mt={2} />
            <Prop label="Visible" h={24} pl={4}><Check on /></Prop>
            <Prop label="Hidden in Game" h={24} pl={4}><Check on /></Prop>
            <Expander><ExpandMark /></Expander>

            <Category title="Physics" />
            <Prop label="Simulate Physics" h={24} pl={4}><Check /></Prop>
            <Prop label="MassInKg" h={24} dim labelPl={17} lead={<Check />}><Field $w={99} $h={19} $pl={5} $dim>863,375366</Field></Prop>
            <Prop label="Linear Damping" h={25}><Num v="0,01" /></Prop>
            <Prop label="Angular Damping" h={23}><Num v="0,0" /></Prop>
            <Prop label="Enable Gravity" h={24} pl={4}><Check on /></Prop>
            <Prop label="Constraints" h={23} labelPl={5} gap={5} lead={<SideMark />} />
            <Prop label="Ignore Radial Impulse" h={24} pl={4}><Check /></Prop>
            <Prop label="Ignore Radial Force" h={24} pl={4}><Check /></Prop>
            <Prop label="Apply Impulse on Damage" h={26} pl={4}><Check on /></Prop>
            <ScrollThumb />
            <ScrollTrack />
          </DetailsBody>
        </Column>
      </Body>
    </Editor>
  );
}
